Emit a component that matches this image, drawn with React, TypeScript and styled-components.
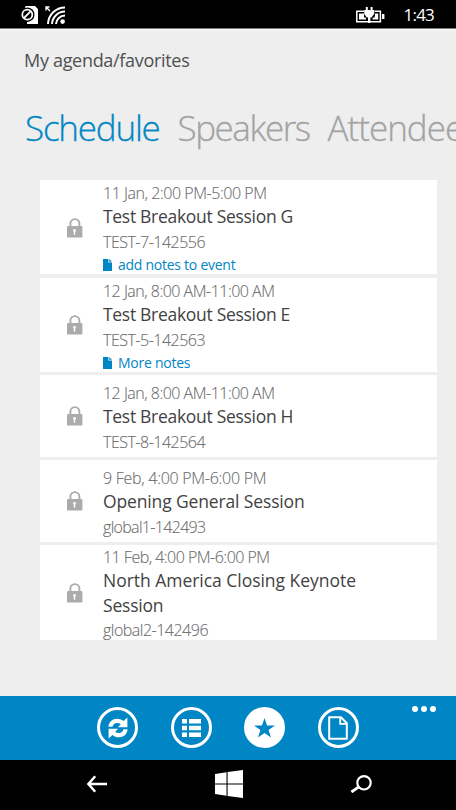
import React from "react";
import styled, { createGlobalStyle } from "styled-components";

const ACCENT = "#0086c4";

const GlobalStyle = createGlobalStyle`
  * { box-sizing: border-box; }
  body {
    margin: 0;
    background: #000;
    font-family: "Open Sans", "Noto Sans", sans-serif;
  }
`;

const Phone = styled.div`
  width: 456px;
  height: 810px;
  display: flex;
  flex-direction: column;
  overflow: hidden;
  background: #000;
`;

const StatusBar = styled.header`
  height: 28px;
  flex: none;
  display: flex;
  align-items: center;
  padding: 2px 22px 0 20px;
  color: #fff;
`;

const StatusIcons = styled.div`
  display: flex;
  gap: 7px;
  margin-right: auto;
`;

const Clock = styled.time`
  margin-left: 18.5px;
  font-size: 17px;
  line-height: 24px;
  letter-spacing: -0.8px;
`;

const Page = styled.main`
  flex: 1;
  min-height: 0;
  display: flex;
  flex-direction: column;
  background: #eee;
  border-top: 1px solid #777;
  box-shadow: inset 0 1px #fff;
`;

const PageTitle = styled.h1`
  margin: 18px 0 0 24px;
  font-size: 18px;
  font-weight: 400;
  line-height: 26px;
  letter-spacing: -0.31px;
  color: #505050;
`;

const Tabs = styled.nav`
  display: flex;
  height: 50px;
  margin: 30px 0 0 25px;
  overflow: hidden;
`;

const Tab = styled.a<{ $active?: boolean; $tracking: number; $width: number }>`
  flex: none;
  width: ${(p) => p.$width}px;
  font-size: 35px;
  font-weight: 300;
  line-height: 50px;
  letter-spacing: ${(p) => p.$tracking}px;
  color: ${(p) => (p.$active ? ACCENT : "#a3a3a3")};
  -webkit-text-stroke: 0.3px currentColor;
  white-space: nowrap;
`;

const Sessions = styled.ul`
  list-style: none;
  width: 397px;
  margin: 27.4px 0 0 40px;
  padding: 0;
  display: flex;
  flex-direction: column;
  gap: 3.8px;
`;

const Card = styled.li<{ $height: number }>`
  height: ${(p) => p.$height}px;
  flex: none;
  display: flex;
  align-items: center;
  background: #fff;
`;

const LockCell = styled.div`
  width: 63px;
  flex: none;
  display: flex;
  padding: 1px 0 0 27px;
`;

const Details = styled.div<{ $top: number }>`
  align-self: flex-start;
  padding-top: ${(p) => p.$top}px;
  white-space: nowrap;
`;

const Meta = styled.div<{ $tracking: number; $line: number }>`
  font-size: 16px;
  font-weight: 300;
  line-height: ${(p) => p.$line}px;
  letter-spacing: ${(p) => p.$tracking}px;
  color: #6c6c6c;
  -webkit-text-stroke: 0.12px currentColor;
`;

const Title = styled.h2<{ $tracking: number }>`
  margin: 0;
  font-size: 17.5px;
  font-weight: 400;
  line-height: 25px;
  letter-spacing: ${(p) => p.$tracking}px;
  color: #424242;
`;

const NoteLink = styled.a`
  display: flex;
  align-items: center;
  gap: 6px;
  margin-top: -1px;
  font-size: 14px;
  line-height: 22px;
  letter-spacing: -0.26px;
  color: ${ACCENT};
`;

const AppBar = styled.footer`
  height: 64px;
  flex: none;
  display: flex;
  align-items: flex-start;
  padding: 11px 20px 0 97.4px;
  background: ${ACCENT};
`;

const BarButtons = styled.div`
  display: flex;
  gap: 32.4px;
  margin-right: auto;
`;

const RoundButton = styled.button<{ $filled?: boolean }>`
  width: 41px;
  height: 41px;
  padding: 0;
  display: flex;
  align-items: center;
  justify-content: center;
  border: 3px solid #fff;
  border-radius: 50%;
  background: ${(p) => (p.$filled ? "#fff" : "transparent")};
  color: ${(p) => (p.$filled ? ACCENT : "#fff")};
`;

const MoreDots = styled.button`
  display: flex;
  gap: 3px;
  padding: 0;
  margin: -1px 0 0;
  border: 0;
  background: none;
`;

const Dot = styled.i`
  width: 6px;
  height: 6px;
  border-radius: 50%;
  background: #fff;
`;

const SystemBar = styled.div`
  height: 50px;
  flex: none;
  display: flex;
  align-items: center;
  justify-content: space-between;
  padding: 0 84px 2px 86px;
  color: #fff;
`;

const LockIcon = () => (
  <svg width="16" height="20" viewBox="0 0 16 20">
    <path d="M3.4 9V5.600a4.500 4.500 0 0 1 9 0V9" fill="none" stroke="#ababab" strokeWidth="1.9" />
    <rect x="0" y="8" width="15.4" height="11.6" rx="1.2" fill="#ababab" />
    <path d="M6.200 11.200h2.600v2.200h-.6v3.400H6.800v-3.400h-.6z" fill="#fff" />
  </svg>
);

const NoteIcon = () => (
  <svg width="9" height="12" viewBox="0 0 9 12">
    <path d="M0 0h5.400v3.600H9V12H0z M6.200 0L9 2.800H6.200z" fill={ACCENT} />
  </svg>
);

const SimIcon = () => (
  <svg width="18" height="18" viewBox="0 0 18 18">
    <path d="M6 0h9l3 3v15H7v-4H5V1z" fill="#fff" />
    <circle cx="7.3" cy="8.7" r="7.2" fill="#000" />
    <circle cx="7.3" cy="8.7" r="5" fill="none" stroke="#fff" strokeWidth="1.8" />
    <path d="M4 12l6.600-6.600" stroke="#fff" strokeWidth="1.8" />
  </svg>
);

const WifiIcon = () => (
  <svg width="20" height="18" viewBox="0 0 20 18">
    <g fill="none" stroke="#fff" strokeWidth="2">
      <path d="M3 18A17 17 0 0 1 20 1.400" />
      <path d="M7 18A13 13 0 0 1 20 5.600" />
      <path d="M11 18A9 9 0 0 1 20 9.600" />
      <path d="M1 1l4 4M1 4.500V1h3.500" strokeWidth="1.4" />
    </g>
    <circle cx="17.6" cy="15.6" r="2.3" fill="#fff" />
  </svg>
);

const BatteryIcon = () => (
  <svg width="29" height="16" viewBox="0 0 29 16">
    <path d="M.8 4.300h23.600v10.400H.8z" fill="none" stroke="#fff" strokeWidth="1.5" />
    <path d="M3 6.500h5l2 4.700v1.300H3zM16.500 12.500v-1.200l2.500-2.200V6.500h3.200v6z" fill="#fff" />
    <path d="M26 7h2.400v5H26z" fill="#fff" />
    <path d="M8 2.500h10.500v8H8z" fill="#000" />
    <path d="M9.800 0h2v3h2.800V0h2v3h1.600v4l-2.600 3.400h-1.200V16H12v-5.600h-1.300L8.200 7V3h1.600z" fill="#fff" />
  </svg>
);

const RefreshIcon = () => (
  <svg width="20" height="22" viewBox="0 0 20 22">
    <path d="M.4 9.800C.8 4.800 4.400 1.800 9.200 1.800c2.500 0 4.600.9 6.300 2.300L19.400.6v9.600h-9.600l3-2.900c-1.100-.9-2.200-1.300-3.600-1.300C6.600 6 5 7.400 4.500 9.800z" fill="#fff" />
    <path d="M19.600 12.200c-.4 5-4 8-8.800 8-2.500 0-4.600-.9-6.300-2.300L.6 21.400v-9.600h9.600l-3 2.900c1.100.9 2.200 1.300 3.600 1.300 2.600 0 4.200-1.400 4.700-3.800z" fill="#fff" />
  </svg>
);

const ListIcon = () => (
  <svg width="19" height="18" viewBox="0 0 19 18">
    <path
      d="M0 0h5v4.600H0zM7 0h12v4.600H7zM0 6.700h5v4.600H0zM7 6.700h12v4.600H7zM0 13.400h5V18H0zM7 13.400h12V18H7z"
      fill="#fff"
    />
  </svg>
);

const StarIcon = () => (
  <svg width="21" height="20" viewBox="0 0 21 20">
    <path d="M10.500 0l2.500 7.400h8l-6.400 4.700 2.400 7.500-6.500-4.600L4 19.600l2.400-7.500L0 7.400h8z" fill="currentColor" />
  </svg>
);

const PageIcon = () => (
  <svg width="20" height="24" viewBox="0 0 20 24">
    <path d="M1.200 1.200H13l5.800 6v15.600H1.200z" fill="none" stroke="#fff" strokeWidth="2" />
    <path d="M12.200 1v6.900H19" fill="none" stroke="#fff" strokeWidth="1.8" />
  </svg>
);

const BackIcon = () => (
  <svg width="22" height="18" viewBox="0 0 22 18">
    <path d="M21 9H3M9.200 1.200L2.400 9l6.800 7.800" fill="none" stroke="#fff" strokeWidth="2.5" />
  </svg>
);

const WindowsIcon = () => (
  <svg width="28" height="28" viewBox="0 0 28 28">
    <path d="M0 4l11.500-1.700v11.200H0zM12.600 2.100L28 0v13.500H12.600zM0 14.600h11.500v11.200L0 24.100zM12.600 14.600H28V28l-15.400-2.100z" fill="#fff" />
  </svg>
);

const SearchIcon = () => (
  <svg width="22" height="18" viewBox="0 0 22 18">
    <circle cx="14" cy="7.8" r="6.7" fill="none" stroke="#fff" strokeWidth="2.2" />
    <path d="M9.200 11.600L1.400 17" fill="none" stroke="#fff" strokeWidth="2.9" />
  </svg>
);

interface Session {
  height: number;
  top: number;
  dateLine: number;
  codeLine: number;
  date: [string, number];
  title: [string, number][];
  code: [string, number];
  note?: string;
}

const sessions: Session[] = [
  {
    height: 93.7, top: 2, dateLine: 22, codeLine: 26,
    date: ["11 Jan, 2:00 PM-5:00 PM", -0.46],
    title: [["Test Breakout Session G", -0.3]],
    code: ["TEST-7-142556", -0.5],
    note: "add notes to event",
  },
  {
    height: 93.7, top: 2, dateLine: 22, codeLine: 26,
    date: ["12 Jan, 8:00 AM-11:00 AM", -0.51],
    title: [["Test Breakout Session E", -0.3]],
    code: ["TEST-5-142563", -0.5],
    note: "More notes",
  },
  {
    height: 81.2, top: 7, dateLine: 22, codeLine: 26,
    date: ["12 Jan, 8:00 AM-11:00 AM", -0.51],
    title: [["Test Breakout Session H", -0.3]],
    code: ["TEST-8-142564", -0.5],
  },
  {
    height: 81.2, top: 7, dateLine: 22, codeLine: 26,
    date: ["9 Feb, 4:00 PM-6:00 PM", -0.28],
    title: [["Opening General Session", -0.14]],
    code: ["global1-142493", -0.68],
  },
  {
    height: 94.7, top: 2, dateLine: 21, codeLine: 25,
    date: ["11 Feb, 4:00 PM-6:00 PM", -0.52],
    title: [["North America Closing Keynote", -0.03], ["Session", -0.2]],
    code: ["global2-142496", -0.5],
  },
];

export default function App() {
  return (
    <Phone>
      <GlobalStyle />
      <StatusBar>
        <StatusIcons>
          <SimIcon />
          <WifiIcon />
        </StatusIcons>
        <BatteryIcon />
        <Clock>1:43</Clock>
      </StatusBar>
      <Page>
        <PageTitle>My agenda/favorites</PageTitle>
        <Tabs>
          <Tab $active $tracking={-1.2} $width={152.5}>Schedule</Tab>
          <Tab $tracking={-1.45} $width={150}>Speakers</Tab>
          <Tab $tracking={-1} $width={137}>Attendee</Tab>
        </Tabs>
        <Sessions>
          {sessions.map((s) => (
            <Card key={s.code[0]} $height={s.height}>
              <LockCell>
                <LockIcon />
              </LockCell>
              <Details $top={s.top}>
                <Meta $tracking={s.date[1]} $line={s.dateLine}>{s.date[0]}</Meta>
                {s.title.map(([text, tracking]) => (
                  <Title key={text} $tracking={tracking}>{text}</Title>
                ))}
                <Meta $tracking={s.code[1]} $line={s.codeLine}>{s.code[0]}</Meta>
                {s.note && (
                  <NoteLink>
                    <NoteIcon />
                    {s.note}
                  </NoteLink>
                )}
              </Details>
            </Card>
          ))}
        </Sessions>
      </Page>
      <AppBar>
        <BarButtons>
          <RoundButton aria-label="Refresh"><RefreshIcon /></RoundButton>
          <RoundButton aria-label="List"><ListIcon /></RoundButton>
          <RoundButton aria-label="Favorites" $filled><StarIcon /></RoundButton>
          <RoundButton aria-label="Notes"><PageIcon /></RoundButton>
        </BarButtons>
        <MoreDots aria-label="More">
          <Dot />
          <Dot />
          <Dot />
        </MoreDots>
      </AppBar>
      <SystemBar>
        <BackIcon />
        <WindowsIcon />
        <SearchIcon />
      </SystemBar>
    </Phone>
  );
}
